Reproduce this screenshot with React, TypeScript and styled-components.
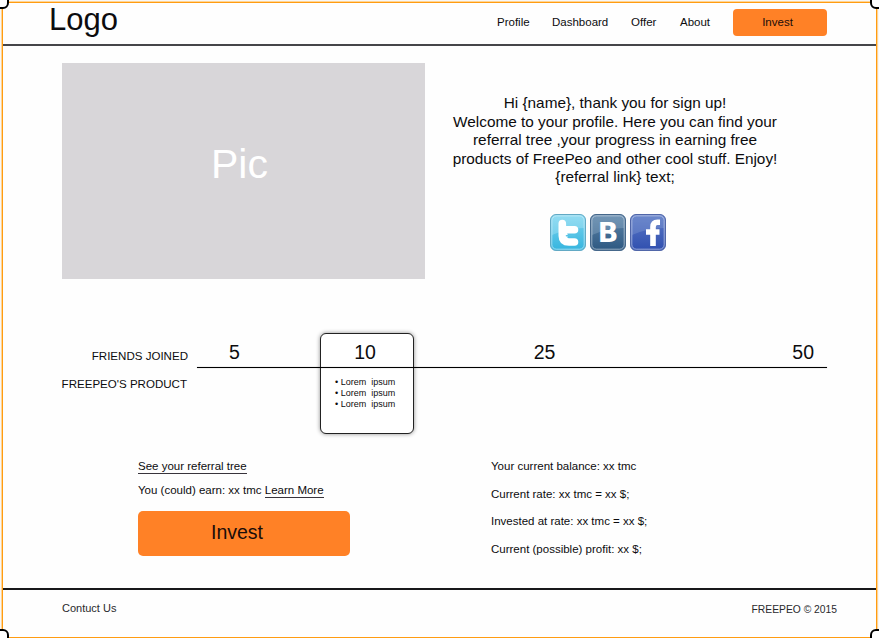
import React from "react";
import styled, { createGlobalStyle } from "styled-components";

const GlobalStyle = createGlobalStyle`
  * { box-sizing: border-box; }
  body {
    margin: 0;
    background: #fdfdfd;
    color: #0c0c0e;
    font-family: "Liberation Sans", Arial, sans-serif;
    overflow: hidden;
  }
`;

const Canvas = styled.div`
  position: relative;
  width: 879px;
  height: 638px;
  padding: 2px 2px 0;
  overflow: hidden;
  background: #f7f7f7;
`;

const Frame = styled.div`
  display: flex;
  flex-direction: column;
  height: 636px;
  border: 1px solid #ff9c12;
  box-shadow: 0 0 0 1px #ffd596;
  background: #fefefe;
`;

const Handle = styled.span<{ $v: "top" | "bottom"; $h: "left" | "right" }>`
  position: absolute;
  ${(p) => p.$v}: -6px;
  ${(p) => p.$h}: -6px;
  width: 15px;
  height: 15px;
  border: 2px solid #000;
  border-radius: 6px;
  background: #fff;
`;

const Header = styled.header`
  display: flex;
  height: 43px;
  flex: none;
  padding-left: 46px;
  border-bottom: 2px solid #454549;
`;

const Logo = styled.div`
  width: 448px;
  font-size: 31px;
  line-height: 34px;
`;

const Nav = styled.nav`
  display: flex;
  font-size: 11.5px;
  line-height: 39px;
`;

const NavItem = styled.a<{ $w: number }>`
  width: ${(p) => p.$w}px;
  white-space: nowrap;
`;

const Button = styled.button<{ $large?: boolean }>`
  display: block;
  width: ${(p) => (p.$large ? 212 : 94)}px;
  height: ${(p) => (p.$large ? 45 : 27)}px;
  margin: ${(p) => (p.$large ? "9px 0 0" : "6px 0 0")};
  padding: ${(p) => (p.$large ? "0 14px 3px 0" : "0 5px 1px 0")};
  border: 0;
  border-radius: ${(p) => (p.$large ? 5 : 4)}px;
  background: #ff8126;
  color: #1a0d0a;
  font-family: inherit;
  font-size: ${(p) => (p.$large ? 19.5 : 11.5)}px;
`;

const Hero = styled.section`
  display: flex;
  height: 270px;
  padding: 17px 0 0 59px;
`;

const Picture = styled.div`
  display: flex;
  align-items: center;
  justify-content: center;
  width: 363px;
  height: 216px;
  padding: 0 8px 13px 0;
  background: #d8d6d9;
  color: #fff;
  font-size: 41px;
`;

const Welcome = styled.div`
  display: flex;
  flex-direction: column;
  align-items: center;
  width: 350px;
  margin-left: 15px;
  padding-top: 31px;
`;

const Intro = styled.p`
  margin: 0;
  font-size: 15.35px;
  line-height: 18.5px;
  text-align: center;
  white-space: nowrap;
`;

const Social = styled.div`
  display: flex;
  gap: 4px;
  margin: 27px 0 0 -14px;

  svg { display: block; }
`;

const Progress = styled.section`
  display: flex;
  height: 101px;
  margin-top: 18px;
  padding-left: 58px;
`;

const Labels = styled.div`
  width: 136px;
  padding-top: 9px;
  font-size: 11.55px;
  line-height: 28px;
  white-space: nowrap;
`;

const Label = styled.div<{ $right: number }>`
  padding-right: ${(p) => p.$right}px;
  text-align: right;
`;

const Track = styled.div`
  display: grid;
  grid-template-columns: 123px 94px 261px 152px;
  grid-template-rows: 34px 1px 66px;
`;

const Line = styled.div`
  grid-area: 2 / 1 / 3 / 5;
  z-index: 1;
  height: 1px;
  background: #000;
  box-shadow: 0 0 1px rgba(0, 0, 0, 0.5);
`;

const Step = styled.div<{ $column: number; $pad?: string; $align?: string }>`
  grid-row: 1;
  grid-column: ${(p) => p.$column};
  z-index: 1;
  padding: ${(p) => p.$pad ?? "0"};
  font-size: 19.5px;
  line-height: 38px;
  text-align: ${(p) => p.$align ?? "center"};
`;

const Card = styled.div`
  grid-area: 1 / 2 / 4 / 3;
  padding: 43px 0 0 14px;
  border: 1px solid #222;
  border-radius: 6px;
  background: #fff;
  box-shadow: 0 0 4px rgba(0, 0, 0, 0.45);
  font-size: 9px;
  line-height: 10.6px;
  white-space: pre;
`;

const Account = styled.section`
  display: flex;
  height: 154px;
  padding-left: 135px;
  font-size: 11.5px;
  white-space: nowrap;
`;

const Actions = styled.div`
  width: 353px;
  padding-top: 20px;
`;

const ActionText = styled.div`
  height: 24px;
  line-height: 24px;
`;

const Link = styled.a`
  display: inline-block;
  line-height: 13px;
  border-bottom: 1px solid #38343c;
`;

const Stats = styled.div`
  padding-top: 18.6px;
  line-height: 27.6px;
`;

const Footer = styled.footer`
  display: flex;
  justify-content: space-between;
  height: 49px;
  padding: 10px 39px 0 59px;
  border-top: 2px solid #18181a;
  color: #29292c;
  font-size: 11px;
  line-height: 16px;
`;

const Copyright = styled.span`
  padding-top: 2px;
  font-size: 10.3px;
`;

type TileProps = { id: string; top: string; bottom: string; shine: string; edge: string; children: React.ReactNode };

function SocialTile({ id, top, bottom, shine, edge, children }: TileProps) {
  return (
    <svg width="36" height="37" viewBox="0 0 36 37">
      <defs>
        <linearGradient id={id} x1="0" y1="0" x2="0" y2="1">
          <stop offset="0" stopColor={top} />
          <stop offset="1" stopColor={bottom} />
        </linearGradient>
      </defs>
      <rect x="0.5" y="0.5" width="35" height="36" rx="5.5" fill={`url(#${id})`} stroke={edge} />
      <path d="M2 6Q2 2 6 2H30Q34 2 34 6V14Q18 14 2 21Z" fill={shine} opacity="0.3" />
      <rect x="1.8" y="1.8" width="32.4" height="33.4" rx="4.5" fill="none" stroke="#fff" strokeOpacity="0.5" />
      {children}
    </svg>
  );
}

export default function App() {
  return (
    <Canvas>
      <GlobalStyle />
      <Frame>
        <Header>
          <Logo>Logo</Logo>
          <Nav>
            <NavItem $w={55}>Profile</NavItem>
            <NavItem $w={79}>Dashboard</NavItem>
            <NavItem $w={49}>Offer</NavItem>
            <NavItem $w={53}>About</NavItem>
            <Button>Invest</Button>
          </Nav>
        </Header>
        <Hero>
          <Picture>Pic</Picture>
          <Welcome>
            <Intro>
              Hi {"{name}"}, thank you for sign up!<br />
              Welcome to your profile. Here you can find your<br />
              referral tree ,your progress in earning free<br />
              products of FreePeo and other cool stuff. Enjoy!<br />
              {"{referral link}"} text;
            </Intro>
            <Social>
              <SocialTile id="bird" top="#7cd3ee" bottom="#35b5df" shine="#c9f2fc" edge="#62a9c4">
                <path d="M12.3 9.5V21.5Q12.3 28 19 28H24.5M12.3 15.8H24.5M12.3 21.8H14" fill="none" stroke="#fff" strokeWidth="7.6" strokeLinecap="round" strokeLinejoin="round" />
                <path d="M16.5 21.7H25" stroke="#59c4e6" strokeWidth="1.6" strokeLinecap="round" />
              </SocialTile>
              <SocialTile id="vk" top="#5d84a8" bottom="#2d5881" shine="#a7bfd6" edge="#45678a">
                <text x="18" y="27.5" textAnchor="middle" fill="#fff" fontFamily="DejaVu Sans, sans-serif" fontWeight="700" fontSize="27">B</text>
              </SocialTile>
              <SocialTile id="fb" top="#5b79c6" bottom="#304faf" shine="#96abdc" edge="#5066a8">
                <path d="M30 8.2H27.5Q23 8.2 23 13V32M16 18H29.5" fill="none" stroke="#fff" strokeWidth="5.6" />
              </SocialTile>
            </Social>
          </Welcome>
        </Hero>
        <Progress>
          <Labels>
            <Label $right={9}>FRIENDS JOINED</Label>
            <Label $right={10}>FREEPEO'S PRODUCT</Label>
          </Labels>
          <Track>
            <Card>{"• Lorem  ipsum\n• Lorem  ipsum\n• Lorem  ipsum"}</Card>
            <Step $column={1} $align="left" $pad="0 0 0 32px">5</Step>
            <Step $column={2} $pad="0 4px 0 0">10</Step>
            <Step $column={3}>25</Step>
            <Step $column={4} $align="right" $pad="0 13px 0 0">50</Step>
            <Line />
          </Track>
        </Progress>
        <Account>
          <Actions>
            <ActionText><Link>See your referral tree</Link></ActionText>
            <ActionText>You (could) earn: xx tmc <Link>Learn More</Link></ActionText>
            <Button $large>Invest</Button>
          </Actions>
          <Stats>
            <div>Your current balance: xx tmc</div>
            <div>Current rate: xx tmc = xx $;</div>
            <div>Invested at rate: xx tmc = xx $;</div>
            <div>Current (possible) profit: xx $;</div>
          </Stats>
        </Account>
        <Footer>
          <span>Contuct Us</span>
          <Copyright>FREEPEO © 2015</Copyright>
        </Footer>
      </Frame>
      <Handle $v="top" $h="left" />
      <Handle $v="top" $h="right" />
      <Handle $v="bottom" $h="left" />
      <Handle $v="bottom" $h="right" />
    </Canvas>
  );
}
